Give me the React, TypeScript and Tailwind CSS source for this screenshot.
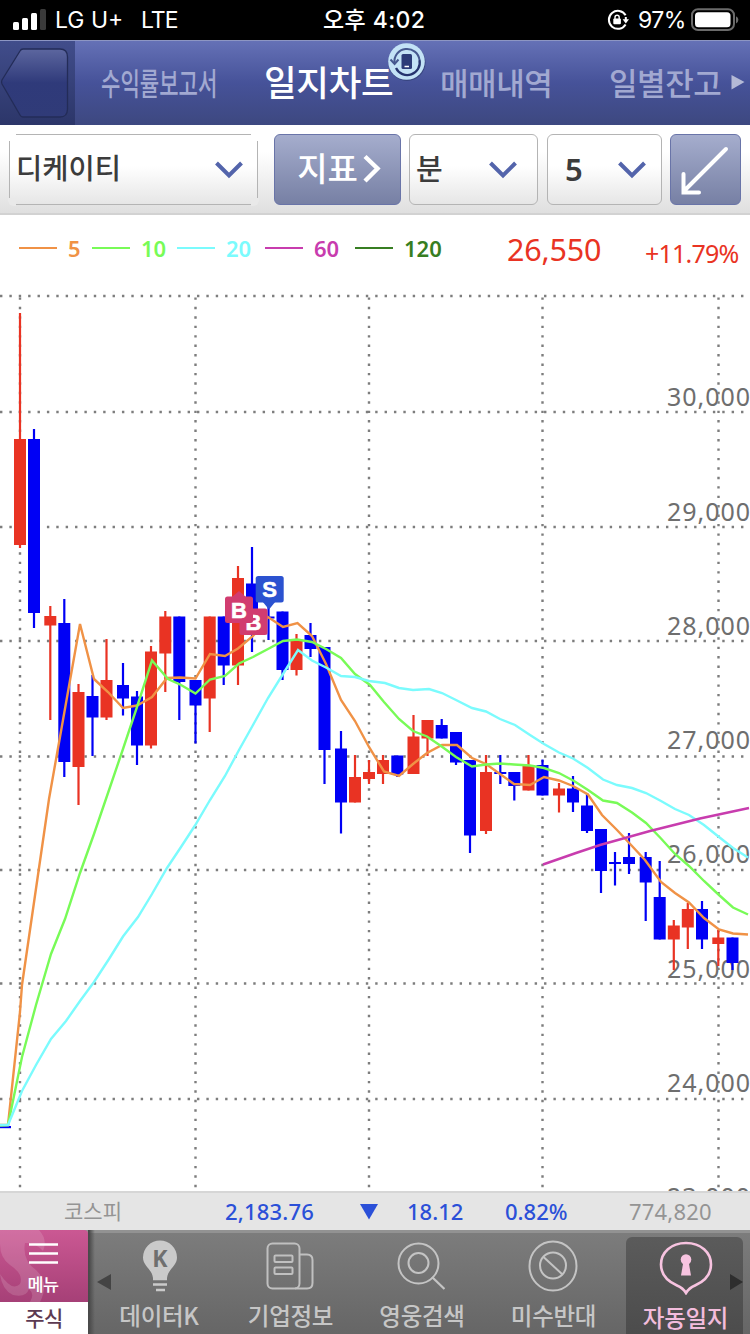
import type { ReactNode } from "react";

type Tone = "up" | "down";

// x, high, low, bodyTop, bodyBottom, tone
type Candle = [number, number, number, number, number, Tone];

const CANDLES: Candle[] = [
  [20, 313, 548, 439, 545, "up"],
  [34, 429, 628, 439, 613, "down"],
  [50.3, 606, 720, 616, 625.5, "up"],
  [64.3, 599, 777, 623, 762, "down"],
  [78.5, 684, 805, 692, 767, "up"],
  [92.5, 675, 756, 696, 717.5, "down"],
  [106.5, 639, 720, 680, 717.5, "up"],
  [123, 663, 715.5, 685, 698.5, "down"],
  [137, 691, 765, 696.5, 745.5, "down"],
  [151, 646, 748.5, 651.5, 745.5, "up"],
  [165.3, 611, 692, 616.5, 653.5, "up"],
  [179.3, 616.5, 720, 616.5, 682, "down"],
  [195.5, 680, 743.5, 680, 705.5, "down"],
  [209.7, 616.5, 732, 616.5, 698.5, "up"],
  [223.7, 616.5, 685, 616.5, 665.5, "down"],
  [238, 566, 685, 578, 665.5, "up"],
  [252, 547, 652, 583.5, 616, "down"],
  [268.5, 600, 640, 616.5, 618.5, "down"],
  [282.5, 611.5, 680, 611.5, 670, "down"],
  [296.5, 634, 675.5, 641, 670, "up"],
  [310.5, 623, 657, 635, 649, "down"],
  [324.5, 647, 784, 647, 750, "down"],
  [341, 731, 833.5, 748.5, 802.5, "down"],
  [355, 755, 802.5, 777, 802.5, "up"],
  [369, 760, 784, 772, 779, "up"],
  [383, 755, 784, 760, 774, "up"],
  [397.3, 755.5, 777, 755.5, 774.5, "down"],
  [413.5, 715, 774, 736.5, 774, "up"],
  [427.5, 720, 756, 720, 738.5, "up"],
  [441.7, 719, 738.5, 725, 738.5, "down"],
  [456, 732, 765, 732, 762.5, "down"],
  [470, 760, 853, 760, 835.5, "down"],
  [486, 755, 834, 772, 831, "up"],
  [500.3, 755, 784, 772, 774, "down"],
  [514.3, 772, 800.5, 772, 786, "down"],
  [528.5, 755, 790.5, 765, 790.5, "up"],
  [542.5, 759.5, 795.5, 765, 795.5, "down"],
  [559, 783, 812.5, 788.5, 795.5, "up"],
  [573, 776, 812, 788.5, 802.5, "down"],
  [587, 793, 833, 805.5, 831, "down"],
  [601, 829, 893, 829, 871, "down"],
  [615, 852, 885.5, 862, 864, "down"],
  [629, 833, 874, 857, 864, "down"],
  [645.7, 852, 921, 857, 882.5, "down"],
  [659.7, 861, 939.5, 897, 939.5, "down"],
  [673.8, 920, 970, 925.5, 939.5, "up"],
  [687.8, 903, 949, 909, 927.5, "up"],
  [702, 901, 949, 909, 939.5, "down"],
  [718.3, 930, 966, 937.5, 944, "up"],
  [732.5, 937.5, 970, 937.5, 963, "down"],
];

const MA_LINES = [
  {
    color: "#f09246",
    points:
      "0,1125 8,1125 20,1012 22,985 39,868 49,799 66,703 80,624 94,679 108,692 123,708 137,705.5 152,697 167,678 180,677.5 195.5,678.5 210,654 225,656 238,648.5 253,636 268,617 283,627 297.5,623 312,636 326,664 341,700 355,721 369,747 384,771.5 399,776 413,764 427,753 442,745 457,745 472,758 486,764 500,774 514,784 530,785 544,777 559,780.5 573,786 588,794.5 602,815 617,830 632,846 645,860 661,882 675,893 689,902.5 704,918 719,929.5 733,933.5 748,934.5",
  },
  {
    color: "#78fb57",
    points:
      "0,1125.5 8,1125 22,1057 36,1005 51,954 65,919 80,873 94,834 108,793 123,749 137,707 152,660.5 168,679 181,685 195.5,693.5 210,679.5 225,676 239,663.5 253,657 268,649 283,641 297,639.5 312,642 326,649 341,658 355,674 370,685 384,702 399,719 413,731 427,736.5 441,746 456,757 472,766.5 486,764.5 500,763.5 514,764.5 530,765.5 544,768 559,773 574,781 588,790 603,800.5 617,803 632,812.5 646,823 661,838.5 675,854 689,866 704,881 719,895 733,907.5 748,914.5",
  },
  {
    color: "#7bfbfd",
    points:
      "0,1125 8,1125 22,1091 36,1065 51,1039 66,1021 80,1001 94,982 109,959 123,936.5 138,917 152,894 167,868 181,847 195,825.5 210,800 225,776 239,750 253,725 268,698 283,674 298,650 312,660.5 326,667.5 341,676 355,677 369,681 385,683 399,688 413,690 429,689 442,693 456,700 472,708 486,711.5 500,719 515,725 530,735 544,744 559,752.5 573,758.5 588,768 603,779.5 617,785 632,788 646,793 661,801 675,809 689,815 704,825 719,837 733,848 748,857.5",
  },
  {
    color: "#c83cae",
    points: "543,864.5 576,853 600,845 650,831 700,818.5 749,808",
  },
];

const GRID_Y = [296, 412, 527, 641, 756.5, 870, 983.5, 1099];
const GRID_X = [20, 195.5, 369, 542.5, 718.5];

const PRICE_LABELS = [
  { text: "30,000", y: 406 },
  { text: "29,000", y: 520.5 },
  { text: "28,000", y: 635 },
  { text: "27,000", y: 748.5 },
  { text: "26,000", y: 863 },
  { text: "25,000", y: 977.5 },
  { text: "24,000", y: 1091.5 },
  { text: "23,000", y: 1206 },
];

const LEGEND = [
  { label: "5", text: "text-[#f09246]", bg: "bg-[#f09246]", width: "w-[73px]" },
  { label: "10", text: "text-[#78fb57]", bg: "bg-[#78fb57]", width: "w-[85px]" },
  { label: "20", text: "text-[#7bfbfd]", bg: "bg-[#7bfbfd]", width: "w-[88px]" },
  { label: "60", text: "text-[#c83cae]", bg: "bg-[#c83cae]", width: "w-[90px]" },
  { label: "120", text: "text-[#377e22]", bg: "bg-[#377e22]", width: "w-[86px]" },
];

function StatusBar() {
  return (
    <div className="flex h-10 items-center bg-black pl-[13px] font-['Inter','Noto_Sans_CJK_KR',sans-serif] text-[23px] text-white">
      <div className="flex w-[310px] items-center">
        <svg width="34" height="22" viewBox="0 0 34 22" fill="#fff">
          <rect x="0" y="13" width="6" height="8" rx="1.5" />
          <rect x="9" y="9" width="6" height="12" rx="1.5" />
          <rect x="18" y="4" width="6" height="17" rx="1.5" />
          <rect x="27" y="0" width="6" height="21" rx="1.5" fill="#3a3a3a" />
        </svg>
        <span className="ml-2 w-[86px]">LG U+</span>
        <span className="tracking-[-1px]">LTE</span>
      </div>
      <div className="w-[284px] font-medium tracking-[0.4px]">오후 4:02</div>
      <svg width="22" height="22" viewBox="0 0 22 22" fill="none" stroke="#fff" strokeWidth="2">
        <path d="M18.6 6.2A9 9 0 1 0 18.6 15.5" />
        <path d="M18.8 8v4" />
        <path d="M15.6 10.2h6.4l-3.2 4.2z" fill="#fff" stroke="none" />
        <rect x="6.3" y="9.6" width="7.6" height="5.6" rx="1" fill="#fff" stroke="none" />
        <path d="M8 10V8.4a2.1 2.1 0 0 1 4.2 0V10" strokeWidth="1.4" />
      </svg>
      <span className="ml-[9px] w-[53px] tracking-[-0.5px]">97%</span>
      <svg width="48" height="24" viewBox="0 0 48 24" className="-mt-px">
        <rect x="1" y="1.2" width="42" height="20.8" rx="6" fill="none" stroke="#6b6b6b" strokeWidth="2" />
        <rect x="4" y="4.2" width="35.5" height="15" rx="3.5" fill="#fff" />
        <path d="M45 8.2q2.4 1 2.4 3.6T45 15.4z" fill="#6b6b6b" />
      </svg>
    </div>
  );
}

function NavBar() {
  return (
    <div className="flex h-[85px] border-t border-[#8d96c3] bg-linear-to-b from-[#6571b6] via-[#465299] to-[#3d4880] text-[31px] text-[#a2a9d1]">
      <div className="h-full w-[75px] bg-linear-to-b from-[#414d8b] to-[#2c3669]">
        <svg width="75" height="84" viewBox="0 0 75 84">
          <defs>
            <linearGradient id="back" x1="0" y1="0" x2="0" y2="1">
              <stop offset="0" stopColor="#5c669f" />
              <stop offset="0.5" stopColor="#2f3a7a" />
              <stop offset="1" stopColor="#303b78" />
            </linearGradient>
          </defs>
          <path
            d="M23 8H60Q67.500 8 67.500 16V68Q67.500 76 60 76H23Q21 76 20 74L2 43Q1 41 2 39L20 10Q21 8 23 8Z"
            fill="url(#back)"
            stroke="#232c58"
            strokeWidth="1.3"
          />
        </svg>
      </div>
      <div className="flex h-[82px] flex-1 items-center">
        <div className="w-[189px] pl-[26px]">
          <span className="inline-block origin-left scale-x-[0.68] font-medium whitespace-nowrap">수익률보고서</span>
        </div>
        <div className="relative -mt-[3px] w-[176px] text-[35.5px] font-medium text-white">
          <span className="inline-block tracking-[-0.3px]">일지차트</span>
          <svg className="absolute top-[-12px] left-[123px]" width="40" height="40" viewBox="0 0 40 40">
            <circle cx="20" cy="20.5" r="18.5" fill="#38457f" />
            <circle cx="19.5" cy="19.5" r="18.3" fill="#c3e2f6" />
            <g fill="none" stroke="#46588f" strokeWidth="2">
              <path d="M7.500 21A12.500 12.500 0 0 1 32.500 18" />
              <path d="M32.500 18A12.500 12.500 0 0 1 9 26" stroke="#25336e" strokeWidth="2.3" />
              <path d="M3.500 17.500L7.600 22L11.500 17.500" />
            </g>
            <rect x="14.5" y="12" width="10.5" height="15" rx="1.5" fill="#2b3b78" />
            <path d="M17.500 24.500h4.500" stroke="#fff" strokeWidth="1.5" />
          </svg>
        </div>
        <div className="w-[169px]">
          <span className="inline-block font-medium tracking-[-0.4px]">매매내역</span>
        </div>
        <span className="w-[122px] font-medium tracking-[-0.4px]">일별잔고</span>
        <svg width="14" height="16" viewBox="0 0 14 16">
          <path d="M0.500 1L13.500 8L0.500 15.500Z" fill="#b4b9d6" />
        </svg>
      </div>
    </div>
  );
}

function Chevron() {
  return (
    <svg width="28" height="20" viewBox="0 0 28 20" fill="none" stroke="#5364ab" strokeWidth="4">
      <path d="M1.500 3L14 15.500L26.500 3" />
    </svg>
  );
}

function SelectBox({ className, children }: { className: string; children: ReactNode }) {
  return (
    <button
      className={`flex h-[71px] items-center justify-between rounded-md border-[1.5px] border-[#b4b4b4] bg-linear-to-b from-white from-45% to-[#e6e6e6] text-[29px] font-medium text-[#3c3c3c] ${className}`}
    >
      {children}
      <Chevron />
    </button>
  );
}

function Toolbar() {
  const blueButton =
    "flex h-[71px] items-center rounded-md border-[1.5px] border-[#6974a8] bg-linear-to-b from-[#a5adcd] to-[#7780a4]";

  return (
    <div className="flex h-[90px] items-start border-b-2 border-[#d2d2d2] bg-linear-to-b from-white from-30% to-[#dfdfdf] pt-[9px] pl-[9px]">
      {/* the corners of the stock picker are left open */}
      <div className="relative">
        <SelectBox className="w-[249px] pr-[14px] pl-[6px]">
          <span className="-mt-[5px] text-[28.5px]">디케이티</span>
        </SelectBox>
        <span className="absolute -top-px -left-px h-2 w-2 bg-white" />
        <span className="absolute -top-px -right-px h-2 w-2 bg-white" />
        <span className="absolute -bottom-px -left-px h-2 w-2 rounded-bl-md bg-[#e9e9e9]" />
        <span className="absolute -right-px -bottom-px h-2 w-2 rounded-br-md bg-[#e9e9e9]" />
      </div>
      <button className={`${blueButton} ml-4 w-[127px] pl-[18px] text-[33px] font-medium text-white`}>
        <span className="-mt-[3px] w-[69px]">지표</span>
        <svg width="19" height="30" viewBox="0 0 19 30" fill="none" stroke="#fff" strokeWidth="4.4" className="-mt-px">
          <path d="M3 2.500L15.500 14.500L3 27" />
        </svg>
      </button>
      <SelectBox className="ml-2 w-[129px] pr-5 pl-[6px]">
        <span className="-mt-[3px]">분</span>
      </SelectBox>
      <SelectBox className="ml-[9px] w-[115px] pr-[15px] pl-[17px]">
        <span className="-mt-px font-['Noto_Sans',sans-serif] text-[31px] font-semibold">5</span>
      </SelectBox>
      <button className={`${blueButton} ml-2 w-[71px] pl-[9px]`}>
        <svg width="52" height="52" viewBox="0 0 52 52" fill="none" stroke="#fff" strokeWidth="4" strokeLinecap="round">
          <path d="M46 5L4 47M3.500 30V48.500H19" />
        </svg>
      </button>
    </div>
  );
}

function LegendRow() {
  return (
    <div className="flex h-[65px] pl-[19px] font-['Noto_Sans',sans-serif]">
      <div className="flex h-[66px] items-center">
        {LEGEND.map((item) => (
          <div key={item.label} className={`flex items-center ${item.width}`}>
            <span className={`mr-[11px] h-[2.5px] w-[38px] shrink-0 ${item.bg}`} />
            <span className={`text-[22px] font-semibold ${item.text}`}>{item.label}</span>
          </div>
        ))}
      </div>
      <div className="mt-[13px] ml-[66px] w-[138px] text-[30.5px] leading-[42px] tracking-[-0.2px] text-[#e93323]">
        26,550
      </div>
      <div className="mt-[17px] text-[25px] leading-[42px] tracking-[-0.8px] text-[#e93323]">+11.79%</div>
    </div>
  );
}

function TradeMark({ x, y, label, color }: { x: number; y: number; label: string; color: string }) {
  return (
    <g>
      <rect x={x} y={y} width="28" height="26.5" rx="2.5" fill={color} />
      <text
        x={x + 14}
        y={y + 21}
        textAnchor="middle"
        fill="#fff"
        stroke="#fff"
        strokeWidth="0.6"
        fontSize="22"
        fontWeight="bold"
        fontFamily="Liberation Sans, sans-serif"
      >
        {label}
      </text>
    </g>
  );
}

function Chart() {
  return (
    <svg width="750" height="911" viewBox="0 280 750 911" className="block">
      <g fill="#6e6e6e" fontSize="25" fontFamily="Noto Sans, sans-serif">
        {PRICE_LABELS.map((p) => (
          <text key={p.text} x="750" y={p.y} textAnchor="end" textLength="83">
            {p.text}
          </text>
        ))}
      </g>

      <g stroke="#7d7d7d" strokeWidth="2.4">
        {GRID_Y.map((y) => (
          <line key={y} x1="0" x2="750" y1={y} y2={y} strokeDasharray="2.4 6.98" />
        ))}
        {GRID_X.map((x) => (
          <line key={x} x1={x} x2={x} y1="297.4" y2="1191" strokeDasharray="2.4 7.04" />
        ))}
      </g>

      <rect x="0" y="1126" width="11" height="2.2" fill="#0000f5" />
      {CANDLES.map(([x, high, low, top, bottom, tone]) => (
        <g key={x} fill={tone === "up" ? "#e93323" : "#0000f5"}>
          <rect x={x - 1.1} y={high} width="2.2" height={low - high} />
          <rect x={x - 6} y={top} width="12" height={bottom - top} />
        </g>
      ))}

      {MA_LINES.map((line) => (
        <polyline key={line.color} points={line.points} fill="none" stroke={line.color} strokeWidth="2.4" />
      ))}

      <TradeMark x={239.5} y={608.5} label="B" color="#d13c70" />
      <path d="M232 597l7-6l7 6z" fill="#d13c70" />
      <TradeMark x={225} y={596.5} label="B" color="#d13c70" />
      <path d="M262 601h14l-7 8.500z" fill="#2b52d0" />
      <TradeMark x={255.7} y={576} label="S" color="#2b52d0" />
    </svg>
  );
}

function IndexBar() {
  return (
    <div className="flex h-[39px] items-center border-t-2 border-[#d6d6d6] bg-[#e5e5e5] pl-[64px] font-['Noto_Sans','Noto_Sans_CJK_KR',sans-serif] text-[22px] font-medium text-[#2b50d8]">
      <span className="w-[161px] text-[21px] font-normal text-[#949494]">코스피</span>
      <span className="w-[135px] tracking-[0.2px]">2,183.76</span>
      <svg width="18" height="16" viewBox="0 0 18 16" className="mr-[29px]">
        <path d="M0 0H18L9 15.500Z" fill="#2b50d8" />
      </svg>
      <span className="w-[98px]">18.12</span>
      <span className="w-[124px]">0.82%</span>
      <span className="font-normal tracking-[0.2px] text-[#949494]">774,820</span>
    </div>
  );
}

function TabItem({ className, icon, children }: { className: string; icon: ReactNode; children: ReactNode }) {
  return (
    <div className={`flex flex-col items-center ${className}`}>
      <div className="flex h-[58px] items-center">{icon}</div>
      <span className="mt-[3px] text-[23.5px] leading-[34px] font-medium tracking-[-0.3px] whitespace-nowrap">
        {children}
      </span>
    </div>
  );
}

function TabBar() {
  return (
    <div className="flex h-[104px] border-t-[3px] border-[#929292] bg-linear-to-b from-[#7c7c7c] to-[#666666] text-[#c6c6c6]">
      <div className="-mt-[3px] flex h-[104px] w-[88px] flex-col">
        <div className="relative flex h-[72px] flex-col items-center overflow-hidden rounded-tr-sm bg-linear-to-b from-[#cb5893] to-[#a64077] pr-[2px] text-white">
          <svg className="absolute top-0 left-0" width="88" height="72" viewBox="0 0 88 72">
            <path
              d="M0 0H39Q48 10 43 21Q35 12 25 13Q22 30 36 40Q50 53 40 72H30Q35 64 29 59Q26 68 13 65Q2 60 0 44Q12 62 20 54Q24 44 10 35Q0 28 0 14Z"
              fill="#fff"
              opacity="0.14"
            />
          </svg>
          <svg className="relative mt-3 shrink-0" width="29" height="23" viewBox="0 0 29 23" stroke="#fff" strokeWidth="2.5">
            <path d="M0 2.500H29M0 11.500H29M0 20.500H29" />
          </svg>
          <span className="relative mt-[7px] text-[17.5px] leading-[24px] font-medium tracking-[-0.5px]">메뉴</span>
        </div>
        <div className="flex h-8 items-center justify-center bg-white text-[21px] font-medium tracking-[-0.5px] text-[#5c3a52]">
          <span>주식</span>
        </div>
      </div>
      <div className="-mt-[3px] flex w-[23px] items-center bg-linear-to-r from-[#4a4a4a] from-5% to-transparent to-30% pl-[9px]">
        <svg width="14" height="16" viewBox="0 0 14 16">
          <path d="M14 0V16L0 8Z" fill="#444" />
        </svg>
      </div>

      <TabItem
        className="mt-1 w-[96px]"
        icon={
          <svg width="36" height="52" viewBox="0 0 36 52" className="ml-[2px]">
            <path
              d="M18 0.500A17 17 0 0 0 1 17.500C1 26 10 29 11 38H25C26 29 35 26 35 17.500A17 17 0 0 0 18 0.500Z"
              fill="#cacaca"
            />
            <path d="M11 39H25M11 44.500H25M14 50H23" stroke="#cacaca" strokeWidth="2.5" />
            <text
              x="18"
              y="26.5"
              textAnchor="middle"
              fontSize="23"
              fontWeight="bold"
              fill="#6f6f6f"
              fontFamily="Noto Sans, sans-serif"
            >
              K
            </text>
          </svg>
        }
      >
        데이터K
      </TabItem>

      <TabItem
        className="mt-1 w-[167px]"
        icon={
          <svg width="48" height="48" viewBox="0 0 48 48" fill="none" stroke="#c0c0c0" strokeWidth="2" className="-ml-[2px]">
            <rect x="1.5" y="1.5" width="32" height="45" rx="5" />
            <path d="M33.500 12.500H41Q46.500 12.500 46.500 18V41Q46.500 46.500 41 46.500H29" />
            <rect x="8.5" y="13.5" width="18" height="6.5" rx="1" />
            <rect x="8.5" y="25.5" width="18" height="6.5" rx="1" />
          </svg>
        }
      >
        기업정보
      </TabItem>

      <TabItem
        className="mt-1 w-[96px]"
        icon={
          <svg width="48" height="48" viewBox="0 0 48 48" fill="none" stroke="#c4c4c4" strokeWidth="2" className="-ml-[2px]">
            <circle cx="21.5" cy="21.5" r="20" />
            <circle cx="21.5" cy="21" r="10" />
            <path d="M35 35L47.500 47" strokeWidth="2.3" />
          </svg>
        }
      >
        영웅검색
      </TabItem>

      <TabItem
        className="mt-1 w-[167px]"
        icon={
          <svg width="50" height="52" viewBox="0 0 50 52" fill="none" stroke="#c4c4c4" strokeWidth="2" className="-ml-[2px]">
            <ellipse cx="25" cy="26" rx="23.5" ry="24.5" />
            <circle cx="25" cy="25.5" r="13" />
            <path d="M15.500 17L34.500 34.500" />
          </svg>
        }
      >
        미수반대
      </TabItem>

      <div className="relative mt-1 ml-[-11px] w-[117px] rounded-t-md bg-linear-to-b from-[#5b5b5b] to-[#4c4c4c] text-[#f2bcdc]">
        <TabItem
          className="pt-[2px] pl-[2px]"
          icon={
            <svg width="54" height="54" viewBox="0 0 54 54" fill="none" stroke="#f7c3e0" strokeWidth="2.6">
              <path d="M27 2C42 2 52 11.500 52 23.500C52 35 44 41 36 44.500Q30 47 27 52Q24 47 18 44.500C10 41 2 35 2 23.500C2 11.500 12 2 27 2Z" />
              <circle cx="27" cy="18.5" r="5.3" fill="#f7c3e0" stroke="none" />
              <path d="M24.500 20H29.500L32 34.500H22Z" fill="#f7c3e0" stroke="none" />
            </svg>
          }
        >
          자동일지
        </TabItem>
        <svg className="absolute top-[37px] right-0" width="13" height="16" viewBox="0 0 13 16">
          <path d="M0 0V16L13 8Z" fill="#2e2e2e" />
        </svg>
      </div>
    </div>
  );
}

export default function App() {
  return (
    <div className="h-[1334px] w-[750px] overflow-hidden bg-white font-['Noto_Sans_CJK_KR',sans-serif]">
      <StatusBar />
      <NavBar />
      <Toolbar />
      <LegendRow />
      <Chart />
      <IndexBar />
      <TabBar />
    </div>
  );
}
